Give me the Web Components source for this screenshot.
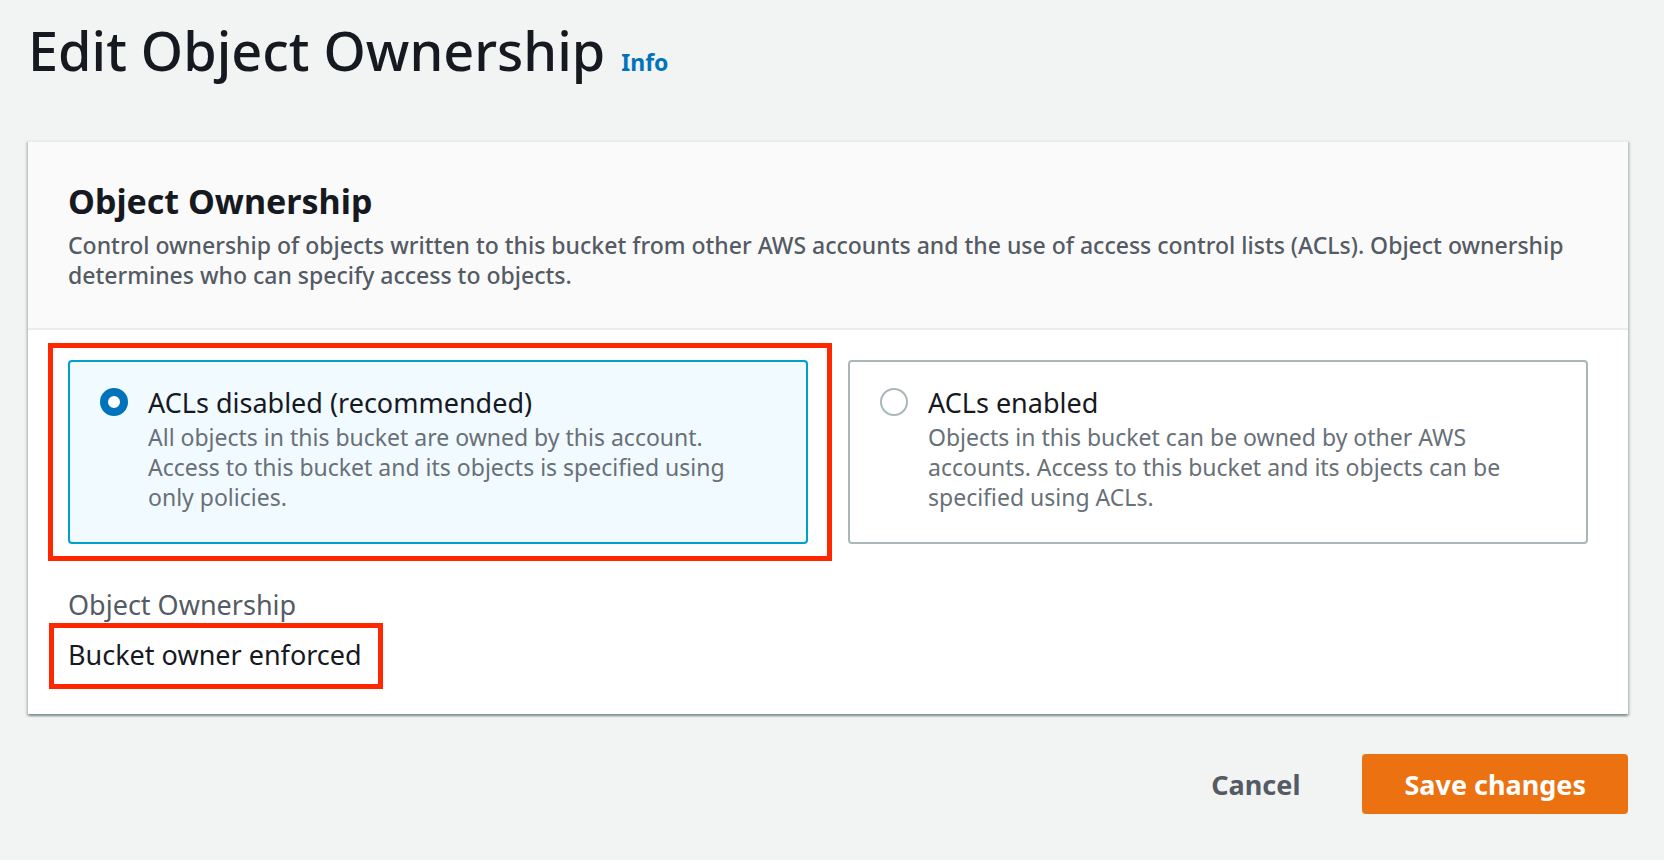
<!DOCTYPE html>
<html lang="en">
<head>
<meta charset="utf-8">
<meta name="viewport" content="width=device-width, initial-scale=1">
<title>Edit Object Ownership</title>
<style>
  :root {
    --text: #16191f;
    --text-secondary: #545b64;
    --text-hint: #687078;
    --link: #0073bb;
    --line: #eaeded;
    --control-line: #aab7b8;
    --selected-line: #00a1c9;
    --selected-fill: #f1faff;
    --accent: #ec7211;
    --highlight: #ff2600;
  }
  body {
    margin: 0;
    background: #f2f3f3;
    color: var(--text);
    font: 400 27px/36px "Noto Sans", "Open Sans", sans-serif;
  }
</style>
</head>
<body>
<ownership-page></ownership-page>

<template id="ownership-page">
  <style>
    :host { display: block; padding: 16px 36px 40px 28px; }
    form { display: flex; flex-direction: column; }
    page-title { margin-bottom: 56px; }
    .actions { display: flex; justify-content: flex-end; gap: 20px; margin-top: 40px; }
  </style>
  <form onsubmit="return false">
    <page-title>Edit Object Ownership</page-title>
    <content-panel>
      <span slot="heading">Object Ownership</span>
      <span slot="description">Control ownership of objects written to this bucket from other AWS accounts and the use of access control lists (ACLs). Object ownership determines who can specify access to objects.</span>
      <tile-group>
        <highlight-frame style="--frame-inset: -17px -24px -17px -20px">
          <option-tile value="disabled" checked>
            ACLs disabled (recommended)
            <span slot="description">All objects in this bucket are owned by this account. Access to this bucket and its objects is specified using only policies.</span>
          </option-tile>
        </highlight-frame>
        <option-tile value="enabled">
          ACLs enabled
          <span slot="description">Objects in this bucket can be owned by other AWS accounts. Access to this bucket and its objects can be specified using ACLs.</span>
        </option-tile>
      </tile-group>
      <value-pair>
        <span slot="label">Object Ownership</span>
        <highlight-frame style="--frame-inset: -14px -21px -16px -19px">Bucket owner enforced</highlight-frame>
      </value-pair>
    </content-panel>
    <div class="actions">
      <action-button>Cancel</action-button>
      <action-button variant="primary">Save changes</action-button>
    </div>
  </form>
</template>

<template id="page-title">
  <style>
    :host { display: flex; align-items: baseline; gap: 16px; }
    h1 { margin: 0; font-size: 54px; line-height: 68px; font-weight: 500; }
    a { color: var(--link); font-size: 23px; line-height: 30px; font-weight: 700; text-decoration: none; }
    a:hover { text-decoration: underline; }
  </style>
  <h1><slot></slot></h1>
  <a href="#info">Info</a>
</template>

<template id="content-panel">
  <style>
    :host {
      display: block;
      background: #fff;
      border-top: 2px solid var(--line);
      box-shadow: 0 2px 2px rgba(0, 40, 40, .3), 2px 2px 2px rgba(0, 40, 40, .15), -2px 2px 2px rgba(0, 40, 40, .15);
    }
    header { background: #fafafa; border-bottom: 2px solid var(--line); padding: 37px 40px 38px; }
    h2 { margin: 0 0 7px; font-size: 34px; line-height: 44px; font-weight: 700; }
    p { margin: 0; color: var(--text-secondary); font-size: 23px; line-height: 30px; font-weight: 500; }
    .body { display: flex; flex-direction: column; gap: 43px; padding: 30px 40px 41px; }
  </style>
  <header>
    <h2><slot name="heading"></slot></h2>
    <p><slot name="description"></slot></p>
  </header>
  <div class="body"><slot></slot></div>
</template>

<template id="tile-group">
  <style>
    :host { display: grid; grid-template-columns: repeat(auto-fit, minmax(min(100%, 480px), 1fr)); gap: 40px; }
  </style>
  <slot></slot>
</template>

<template id="option-tile">
  <style>
    :host { display: block; }
    .tile {
      box-sizing: border-box;
      height: 100%;
      display: grid;
      grid-template-columns: 28px 1fr;
      column-gap: 20px;
      row-gap: 1px;
      padding: 23px 40px 30px 30px;
      border: 2px solid var(--control-line);
      border-radius: 4px;
      background: #fff;
    }
    .tile:has(input:checked) { border-color: var(--selected-line); background: var(--selected-fill); }
    input {
      appearance: none;
      box-sizing: border-box;
      width: 28px;
      height: 28px;
      margin: 3px 0 0;
      border: 2px solid var(--control-line);
      border-radius: 50%;
      background: #fff;
    }
    input:checked { border: 8px solid var(--link); }
    p { grid-column: 2; margin: 0; color: var(--text-hint); font-size: 23px; line-height: 30px; }
  </style>
  <div class="tile">
    <input type="radio" id="choice" name="acl" aria-describedby="hint">
    <label for="choice"><slot></slot></label>
    <p id="hint"><slot name="description"></slot></p>
  </div>
</template>

<template id="value-pair">
  <style>
    :host { display: flex; flex-direction: column; align-items: flex-start; gap: 14px; }
    .label { color: var(--text-secondary); }
  </style>
  <div class="label"><slot name="label"></slot></div>
  <slot></slot>
</template>

<template id="highlight-frame">
  <style>
    :host { display: grid; position: relative; }
    .frame {
      position: absolute;
      inset: var(--frame-inset, -16px);
      border: 5px solid var(--highlight);
      pointer-events: none;
    }
  </style>
  <slot></slot>
  <div class="frame"></div>
</template>

<template id="action-button">
  <style>
    :host { display: block; }
    button {
      display: block;
      border: 0;
      border-radius: 4px;
      padding: 13px 42px 11px;
      background: transparent;
      color: var(--text-secondary);
      font: inherit;
      font-weight: 700;
      cursor: pointer;
    }
    :host([variant="primary"]) button { background: var(--accent); color: #fff; }
  </style>
  <button type="button"><slot></slot></button>
</template>

<script>
  class TemplateElement extends HTMLElement {
    constructor() {
      super();
      const template = document.getElementById(this.localName);
      this.attachShadow({ mode: "open" }).append(template.content.cloneNode(true));
    }
  }

  class OptionTile extends TemplateElement {
    connectedCallback() {
      this.radio = this.shadowRoot.querySelector("input");
      this.radio.value = this.getAttribute("value");
      this.radio.checked = this.hasAttribute("checked");
      this.radio.onchange = () =>
        this.dispatchEvent(new CustomEvent("tile-select", { bubbles: true }));
    }
  }

  // Radios live in separate shadow trees, so the group keeps them exclusive.
  class TileGroup extends TemplateElement {
    connectedCallback() {
      this.addEventListener("tile-select", (event) => {
        for (const tile of this.querySelectorAll("option-tile")) {
          tile.radio.checked = tile === event.target;
        }
      });
    }
  }

  customElements.define("option-tile", OptionTile);
  customElements.define("tile-group", TileGroup);
  for (const name of ["page-title", "content-panel", "value-pair", "highlight-frame", "action-button", "ownership-page"]) {
    customElements.define(name, class extends TemplateElement {});
  }
</script>
</body>
</html>
